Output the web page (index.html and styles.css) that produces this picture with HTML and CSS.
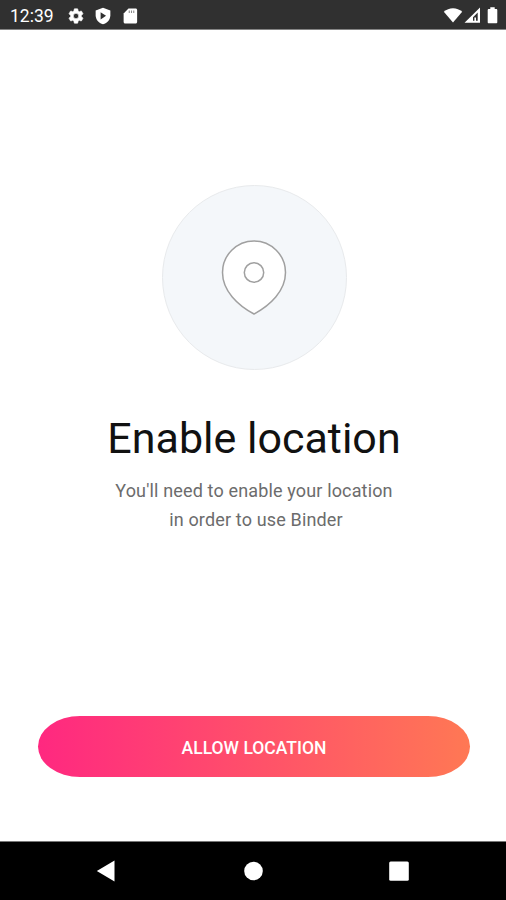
FILE: index.html
```html
<!DOCTYPE html>
<html lang="en">
<head>
  <meta charset="UTF-8">
  <meta name="viewport" content="width=device-width, initial-scale=1.0">
  <title>Enable location</title>
  <link rel="stylesheet" href="styles.css">
</head>
<body>
  <header class="status-bar">
    <span class="time">12:39</span>
    <div class="status-left">
      <svg width="18" height="18" viewBox="0 0 24 24" fill="#fff" stroke="#fff" stroke-width=".8">
        <path d="M19.14 12.94c.04-.3.06-.61.06-.94 0-.32-.02-.64-.07-.94l2.03-1.58a.49.49 0 0 0 .12-.61l-1.92-3.32a.49.49 0 0 0-.59-.22l-2.39.96c-.5-.38-1.03-.7-1.62-.94l-.36-2.54a.48.48 0 0 0-.48-.41h-3.84c-.24 0-.43.17-.47.41l-.36 2.54c-.59.24-1.13.57-1.62.94l-2.39-.96a.48.48 0 0 0-.59.22L2.74 8.87a.48.48 0 0 0 .12.61l2.03 1.58c-.05.3-.09.63-.09.94s.02.64.07.94l-2.03 1.58a.49.49 0 0 0-.12.61l1.92 3.32c.12.22.37.29.59.22l2.39-.96c.5.38 1.03.7 1.62.94l.36 2.54c.05.24.24.41.48.41h3.84c.24 0 .44-.17.47-.41l.36-2.54c.59-.24 1.13-.56 1.62-.94l2.39.96c.22.08.47 0 .59-.22l1.92-3.32a.48.48 0 0 0-.12-.61zM12 15.6a3.6 3.6 0 1 1 0-7.2 3.6 3.6 0 0 1 0 7.2z"/>
      </svg>
      <svg width="18" height="18" viewBox="0 0 24 24">
        <path fill="#fff" d="M12 1 2.200 4.600V11c0 5.800 4 10.300 9.800 12 5.800-1.700 9.800-6.200 9.800-12V4.600z"/>
        <path fill="#303030" d="M8.800 7v9.600l7.300-4.800z"/>
      </svg>
      <svg width="18" height="18" viewBox="0 0 24 24">
        <path fill="#fff" d="M19.500 2H10L3.500 8.500V20c0 1.100.9 2 2 2h14c1.100 0 2-.9 2-2V4c0-1.100-.9-2-2-2z"/>
        <path stroke="#888" stroke-width="1.400" d="M11 4.500v3.500M14 4.500v3.500M17 4.500v3.500"/>
      </svg>
    </div>
    <div class="status-right">
      <svg width="20" height="18" viewBox="0 0 20 18">
        <path fill="#fff" d="M10 15.500.8 4.800C3.400 2.400 6.600 1.200 10 1.200s6.600 1.200 9.200 3.600z"/>
      </svg>
      <svg width="17" height="18" viewBox="0 0 17 18">
        <path fill="#fff" fill-rule="evenodd" d="M.5 15.800 16 .5v15.300zM9 13.800h4.700V5.500L9 10.200z"/>
        <path fill="#fff" d="M10.400 10.500h1.600v3.500h-1.600z"/>
      </svg>
      <svg width="11" height="18" viewBox="0 0 11 18">
        <path fill="#fff" d="M3.300.2h4.400v1.700h1.500c.7 0 1.100.5 1.100 1.100v12.200c0 .7-.5 1.100-1.100 1.100H1.800c-.7 0-1.100-.5-1.100-1.100V3c0-.7.5-1.100 1.100-1.100h1.500z"/>
      </svg>
    </div>
  </header>

  <main class="content">
    <div class="pin-circle">
      <svg width="66" height="76" viewBox="0 0 66 76" fill="#fff" stroke="#a0a0a0" stroke-width="1.500">
        <path d="M33 74C17 65.500 1.500 51 1.500 32.500a31.500 31.500 0 0 1 63 0C64.500 51 49 65.500 33 74z"/>
        <circle cx="33" cy="32.500" r="9.700"/>
      </svg>
    </div>
    <h1>Enable location</h1>
    <p>You'll need to enable your location<br><span class="second-line">in order to use Binder</span></p>
    <button class="allow-button">ALLOW LOCATION</button>
  </main>

  <nav class="nav-bar">
    <svg width="20" height="24" viewBox="0 0 20 24" fill="#fff"><path d="M.8 12 18.500 1.600v20.800z"/></svg>
    <svg width="20" height="24" viewBox="0 0 20 24" fill="#fff"><circle cx="10.500" cy="12" r="9.300"/></svg>
    <svg width="20" height="24" viewBox="0 0 20 24" fill="#fff"><rect x=".2" y="2.500" width="19.600" height="19.200" rx="1.500"/></svg>
  </nav>
</body>
</html>
```
FILE: styles.css
```css
* {
  box-sizing: border-box;
}
body {
  margin: 0;
  height: 900px;
  display: flex;
  flex-direction: column;
  background: #fff;
  font-family: Roboto, sans-serif;
}
svg {
  display: block;
}
.status-bar {
  height: 30px;
  display: flex;
  align-items: center;
  padding: 2px 8px 0 10px;
  background: #303030;
  border-bottom: 1px solid #848484;
  color: #fff;
}
.time {
  width: 57px;
  font-size: 17.500px;
}
.status-left {
  display: flex;
  gap: 9px;
}
.status-right {
  display: flex;
  gap: 1px;
  margin-left: auto;
}
.status-right svg:last-child {
  margin-left: 5px;
}
.content {
  flex: 1;
  display: flex;
  flex-direction: column;
  align-items: center;
  padding: 155px 36px 0 38px;
}
.pin-circle {
  width: 185px;
  height: 185px;
  display: flex;
  align-items: center;
  justify-content: center;
  background: #f4f7fa;
  border: 1px solid #e8eaec;
  border-radius: 50%;
}
h1 {
  margin: 43px 0 0;
  line-height: 50px;
  font-size: 43px;
  font-weight: 380;
  letter-spacing: 0;
  color: #111;
}
p {
  margin: 13px 0 0;
  line-height: 29px;
  font-size: 18px;
  font-weight: 380;
  letter-spacing: 0.150px;
  text-align: center;
  color: #6c6c6c;
}
.second-line {
  padding-left: 4px;
}
.allow-button {
  width: 432px;
  height: 61px;
  margin-top: 182px;
  padding: 2px 0 0;
  border: none;
  border-radius: 42px / 30.500px;
  background: linear-gradient(to right, #ff2880, #ff7854);
  color: #fff;
  font-family: inherit;
  font-size: 17.500px;
  font-weight: 500;
}
.nav-bar {
  height: 59px;
  display: flex;
  justify-content: space-between;
  align-items: center;
  padding: 0 97px 0 96px;
  background: #000;
  border-top: 1px solid #777;
}
```
